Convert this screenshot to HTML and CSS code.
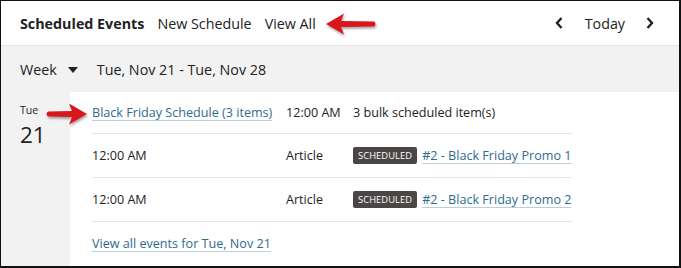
FILE: index.html
```html
<!DOCTYPE html>
<html>
<head>
<meta charset="utf-8">
<link rel="stylesheet" href="styles.css">
</head>
<body>
<div class="frame">
  <header class="topbar">
    <nav class="tabs">
      <span class="tab tab-active">Scheduled Events</span>
      <span class="tab">New Schedule</span>
      <span class="tab">View All</span>
    </nav>
    <div class="pager">
      <span class="chev"><svg width="8" height="12" viewBox="0 0 8 12"><path d="M6.5 1 L2 6 L6.5 11" fill="none" stroke="#222" stroke-width="2.4"/></svg></span>
      <span class="today">Today</span>
      <span class="chev"><svg width="8" height="12" viewBox="0 0 8 12"><path d="M1.5 1 L6 6 L1.5 11" fill="none" stroke="#222" stroke-width="2.4"/></svg></span>
    </div>
  </header>
  <div class="toolbar">
    <span class="range-select">Week <svg class="caret" width="10" height="6" viewBox="0 0 10 6"><path d="M0 0 H10 L5 6 Z" fill="#222"/></svg></span>
    <span class="range">Tue, Nov 21 - Tue, Nov 28</span>
  </div>
  <div class="body">
    <div class="day">
      <div class="dow">Tue</div>
      <div class="dnum">21</div>
    </div>
    <div class="events">
      <div class="row">
        <a class="link c1">Black Friday Schedule (3 items)</a>
        <span class="c2">12:00 AM</span>
        <span class="c3">3 bulk scheduled item(s)</span>
      </div>
      <div class="row">
        <span class="c1">12:00 AM</span>
        <span class="c2">Article</span>
        <span class="c3"><span class="badge">SCHEDULED</span><a class="link">#2 - Black Friday Promo 1</a></span>
      </div>
      <div class="row">
        <span class="c1">12:00 AM</span>
        <span class="c2">Article</span>
        <span class="c3"><span class="badge">SCHEDULED</span><a class="link">#2 - Black Friday Promo 2</a></span>
      </div>
      <div class="more"><a class="link">View all events for Tue, Nov 21</a></div>
    </div>
  </div>
  <svg class="arrow arrow-top" width="58" height="30" viewBox="0 0 58 30">
    <defs><filter id="sh" x="-20%" y="-40%" width="140%" height="180%"><feDropShadow dx="1" dy="2" stdDeviation="1.2" flood-color="#000" flood-opacity="0.35"/></filter></defs>
    <path filter="url(#sh)" d="M2 12 L20 1.5 L17 9 L50 9.5 Q53 12 50 14.5 L17 15 L20 22.5 Z" fill="#d9141f"/>
  </svg>
  <svg class="arrow arrow-left" width="50" height="28" viewBox="0 0 50 28">
    <defs><filter id="sh2" x="-20%" y="-40%" width="140%" height="180%"><feDropShadow dx="1" dy="2" stdDeviation="1.2" flood-color="#000" flood-opacity="0.35"/></filter></defs>
    <path filter="url(#sh2)" d="M43 12 L25 1.5 L28 9 L4 9.5 Q1 12 4 14.5 L28 15 L25 22.5 Z" fill="#d9141f"/>
  </svg>
</div>
</body>
</html>
```
FILE: styles.css
```css
* { box-sizing: border-box; }
html, body { margin: 0; padding: 0; background: #fff; }
body { font-family: "Open Sans", "Noto Sans", sans-serif; color: #222; }
.frame {
  position: relative;
  width: 681px;
  height: 268px;
  border: 1px solid #111;
  border-right-width: 2px;
  border-bottom-width: 2px;
  overflow: hidden;
  background: #fff;
}
.topbar {
  height: 45px;
  display: flex;
  align-items: center;
  justify-content: space-between;
  padding: 0 25px 0 19px;
  border-bottom: 1px solid #e6e6e6;
}
.tabs { display: flex; gap: 13px; font-size: 14.3px; }
.tab-active { font-weight: 700; }
.pager { display: flex; align-items: center; font-size: 14.3px; }
.chev { display: flex; align-items: center; }
.today { margin: 0 21px 0 22px; }
.toolbar {
  height: 46px;
  background: #f3f2f3;
  display: flex;
  align-items: center;
  padding: 0 19px;
  font-size: 14.3px;
}
.range-select { display: flex; align-items: center; gap: 11px; margin-right: 19px; }
.caret { margin-top: 1px; }
.body { display: flex; height: 175px; }
.day {
  width: 69px;
  background: #f3f2f3;
  padding: 12px 0 0 19px;
}
.dow { font-size: 10.5px; line-height: 13px; }
.dnum { font-size: 22.5px; line-height: 24px; margin-top: 6px; }
.events { width: 480px; margin-left: 22px; font-size: 12.6px; white-space: nowrap; }
.row {
  display: flex;
  align-items: center;
  height: 44px;
  border-bottom: 1px solid #e6e6e6;
}
.row:first-child { height: 42px; }
.c1 { width: 194px; flex: none; }
.c2 { width: 67px; flex: none; }
.c3 { display: flex; align-items: center; }
.link {
  color: #2e6b8f;
  text-decoration: underline;
  text-decoration-color: #b9cfdc;
  text-underline-offset: 3px;
}
.badge {
  background: #4a4646;
  color: #fff;
  font-size: 9.3px;
  line-height: 17px;
  padding: 0 5px;
  border-radius: 2px;
  margin-right: 5px;
  letter-spacing: 0.1px;
}
.more { padding-top: 13px; }
.arrow { position: absolute; }
.arrow-top { left: 323px; top: 11px; }
.arrow-left { left: 43px; top: 101px; }
```
